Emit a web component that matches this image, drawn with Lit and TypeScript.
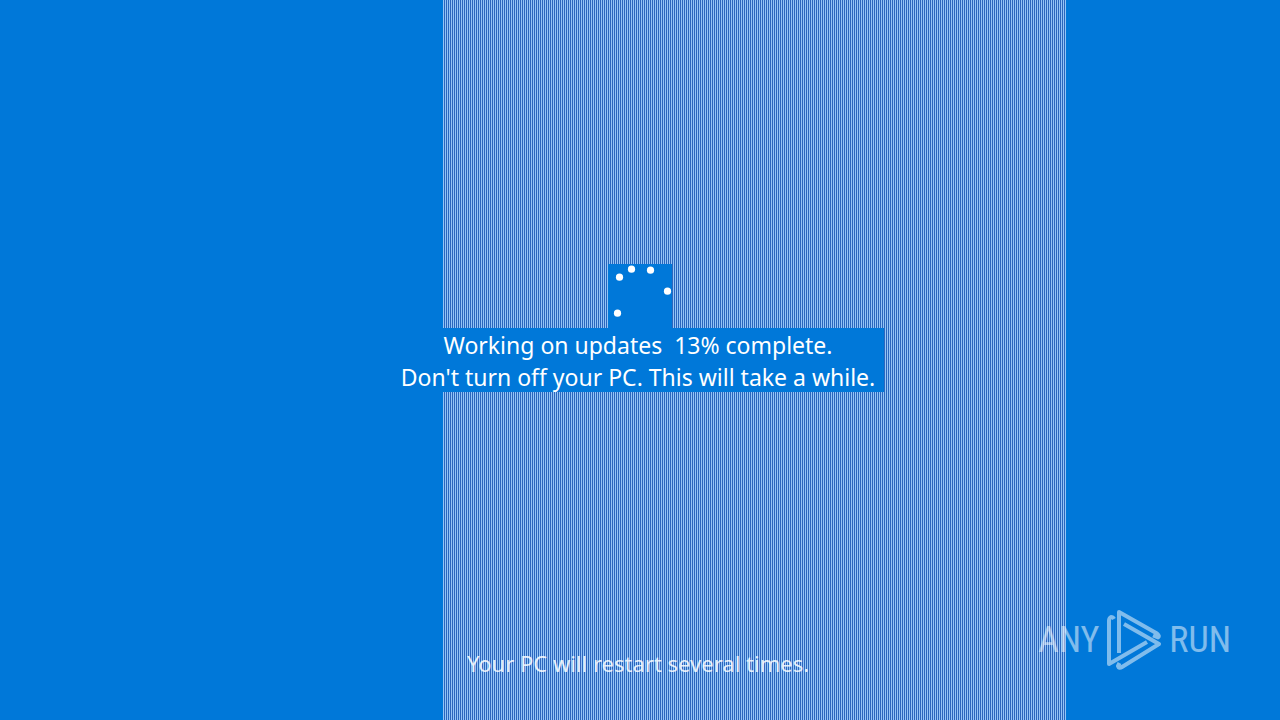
import { LitElement, html, css, svg } from "lit";
import { customElement, property } from "lit/decorators.js";

const DOTS = [
  [11, 13],
  [23, 5],
  [42, 6],
  [59, 27],
  [9, 49],
];

@customElement("progress-ring")
class ProgressRing extends LitElement {
  static styles = css`
    :host {
      display: block;
      width: 64px;
      height: 64px;
      background: #0078d9;
    }
    svg {
      display: block;
    }
  `;

  render() {
    return html`<svg width="64" height="64" viewBox="0 0 64 64" fill="#fff" aria-hidden="true">
      ${DOTS.map(([x, y]) => svg`<circle cx=${x + 0.5} cy=${y + 0.2} r="3.6" />`)}
    </svg>`;
  }
}

@customElement("brand-mark")
class BrandMark extends LitElement {
  static styles = css`
    :host {
      display: flex;
      align-items: center;
      gap: 7px;
      color: #fff;
      opacity: 0.5;
      font: 400 36px/62px "Roboto Condensed", "Open Sans Condensed", "Liberation Sans Narrow", sans-serif;
    }
    svg {
      display: block;
    }
  `;

  render() {
    return html`<span>ANY</span>
      <svg width="56" height="62" viewBox="0 0 56 62" fill="none" stroke="currentColor" stroke-width="4" stroke-linejoin="round" aria-hidden="true">
        <path d="M8 10Q7 8 5 8Q3 9 3 12V55L41 33" />
        <path d="M13 44V3L51 24.500Q54 27 52 28.500L47 26.500" />
        <path d="M18 15L53 35L16 58Q13 60 12 57L13.500 54" />
      </svg>
      <span>RUN</span>`;
  }
}

@customElement("app-root")
class AppRoot extends LitElement {
  @property({ type: Number }) percent = 13;

  static styles = css`
    :host {
      display: block;
    }
    .screen {
      display: grid;
      grid-template-columns: 443px minmax(0, 1fr) 214px;
      grid-template-rows: 33fr auto 32fr auto 5fr;
      min-height: 100vh;
      background: #0078d9;
      color: #fff;
      font: 23px/30px "Noto Sans", sans-serif;
      overflow: hidden;
    }
    .band {
      grid-area: 1 / 2 / -1 / 3;
      background: repeating-linear-gradient(to right, #94c4f6 0 1px, #2b66bd 1px 2px);
    }
    .status {
      grid-area: 2 / 1 / 3 / -1;
      display: flex;
      flex-direction: column;
      align-items: center;
    }
    .message {
      box-sizing: border-box;
      width: 488px;
      padding-right: 4px;
      background: #0078d9;
      text-align: center;
    }
    p {
      margin: 0;
      padding-top: 2px;
      white-space: pre;
    }
    .note {
      grid-area: 4 / 1 / 5 / -1;
      text-align: center;
      padding: 0 4px 2px 0;
      font-size: 22px;
      color: rgba(255, 255, 255, 0.85);
    }
    .brand {
      grid-area: 1 / 1 / -1 / -1;
      align-self: end;
      justify-self: end;
      margin: 0 49px 49px 0;
    }
  `;

  render() {
    return html`<main class="screen">
      <div class="band"></div>
      <section class="status" role="status">
        <progress-ring></progress-ring>
        <div class="message">
          <p>${`Working on updates  ${this.percent}% complete.`}</p>
          <p>Don't turn off your PC. This will take a while.</p>
        </div>
      </section>
      <p class="note">Your PC will restart several times.</p>
      <brand-mark class="brand"></brand-mark>
    </main>`;
  }
}
